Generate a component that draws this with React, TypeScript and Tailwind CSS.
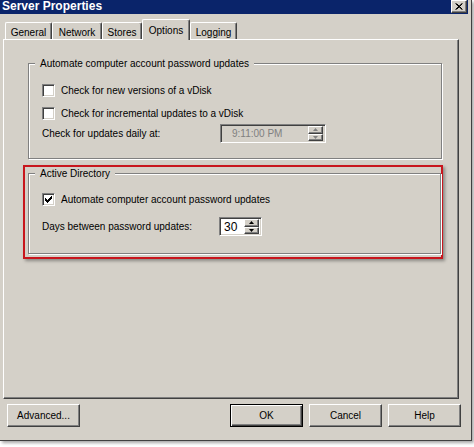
import React from 'react';

const face = 'bg-[#d4d0c8]';

function Checkbox({ checked }: { checked?: boolean }) {
  return (
    <div className="w-[13px] h-[13px] bg-white border border-t-[#808080] border-l-[#808080] border-r-white border-b-white shadow-[inset_1px_1px_0_#404040,inset_-1px_-1px_0_#d4d0c8] flex items-center justify-center shrink-0">
      {checked && (
        <svg width="9" height="9" viewBox="0 0 9 9">
          <path d="M1.5 3.5 L3.5 5.5 L7.5 1.5 M1.5 4.5 L3.5 6.5 L7.5 2.5 M1.5 5.5 L3.5 7.5 L7.5 3.5" stroke="#000" strokeWidth="1" fill="none" shapeRendering="crispEdges" />
        </svg>
      )}
    </div>
  );
}

function SpinButton({ up, disabled }: { up?: boolean; disabled?: boolean }) {
  const color = disabled ? '#808080' : '#000';
  return (
    <div className="h-[8px] w-[15px] bg-[#d4d0c8] border border-t-white border-l-white border-r-[#404040] border-b-[#404040] shadow-[inset_-1px_-1px_0_#808080] flex items-center justify-center">
      <svg width="5" height="3" viewBox="0 0 5 3">
        {up ? <path d="M2.5 0 L5 3 L0 3 Z" fill={color} /> : <path d="M0 0 L5 0 L2.5 3 Z" fill={color} />}
      </svg>
    </div>
  );
}

function SpinInput({ value, width, disabled }: { value: string; width: string; disabled?: boolean }) {
  return (
    <div
      className={`${width} h-[19px] flex items-stretch border border-t-[#808080] border-l-[#808080] border-r-white border-b-white shadow-[inset_1px_1px_0_#404040,inset_-1px_-1px_0_#d4d0c8] ${disabled ? 'bg-[#d4d0c8] text-[#808080]' : 'bg-white text-black'}`}
    >
      <div className={`flex-1 flex items-center ${disabled ? 'pl-[11px]' : 'pl-[4px] text-[12px]'}`}>{value}</div>
      <div className="flex flex-col justify-center gap-0 pr-[2px] py-[1px]">
        <SpinButton up disabled={disabled} />
        <SpinButton disabled={disabled} />
      </div>
    </div>
  );
}

function GroupBox({ title, className, children }: { title: string; className: string; children: React.ReactNode }) {
  return (
    <fieldset className={`border border-[#808080] shadow-[1px_1px_0_#fff,inset_1px_1px_0_#fff] p-0 m-0 ${className}`}>
      <legend className="ml-[6px] px-[5px] leading-[13px] bg-[#d4d0c8]">{title}</legend>
      {children}
    </fieldset>
  );
}

function Button({ label, isDefault, className = '' }: { label: string; isDefault?: boolean; className?: string }) {
  return (
    <button
      className={`w-[73px] h-[23px] ${face} text-[10px] text-black border ${
        isDefault
          ? 'border-black shadow-[inset_1px_1px_0_#fff,inset_-1px_-1px_0_#404040,inset_-2px_-2px_0_#808080]'
          : 'border-t-white border-l-white border-r-[#404040] border-b-[#404040] shadow-[inset_-1px_-1px_0_#808080]'
      } ${className}`}
    >
      {label}
    </button>
  );
}

const tabs = [
  { name: 'General', w: 'w-[47px]' },
  { name: 'Network', w: 'w-[50px]' },
  { name: 'Stores', w: 'w-[40px]' },
  { name: 'Options', w: 'w-[48px]', active: true },
  { name: 'Logging', w: 'w-[47px]' },
];

export default function App() {
  return (
    <div className="w-[474px] h-[447px] bg-white font-['Liberation_Sans',Arial,sans-serif] text-[10px] text-black">
      <div className="w-[472px] h-[441px] bg-[#d4d0c8] border-r border-b border-[#404040] shadow-[2px_2px_3px_rgba(0,0,0,0.35)] flex flex-col">
        {/* title bar */}
        <div className="h-[14px] mr-[3px] bg-[#0a246a] flex items-start justify-between">
          <span className="pl-[2px] text-[12px] leading-[13px] font-bold text-white">Server Properties</span>
          <div className="w-[16px] h-[13px] mr-[1px] bg-[#d4d0c8] border border-t-white border-l-white border-r-[#404040] border-b-[#404040] shadow-[inset_-1px_-1px_0_#808080] flex items-center justify-center">
            <svg width="8" height="7" viewBox="0 0 8 7">
              <path d="M0.5 0.5 L7 6.5 M1.5 0.5 L7.5 6.5 M7 0.5 L0.5 6.5 M7.5 0.5 L1.5 6.5" stroke="#000" strokeWidth="1" />
            </svg>
          </div>
        </div>

        {/* tabs */}
        <div className="flex items-end pl-[5px] mt-[5px] h-[20px] relative z-10">
          {tabs.map((t) =>
            t.active ? (
              <div
                key={t.name}
                className={`${t.w} h-[21px] -mb-[1px] ${face} border-t border-l border-t-white border-l-white border-r border-r-[#404040] rounded-t-[2px] shadow-[inset_-1px_0_0_#808080] flex justify-center pt-[3px]`}
              >
                {t.name}
              </div>
            ) : (
              <div
                key={t.name}
                className={`${t.w} h-[17px] ${face} border-t border-l border-t-white border-l-white border-r border-r-[#404040] rounded-t-[2px] shadow-[inset_-1px_0_0_#808080] flex justify-center pt-[2px]`}
              >
                {t.name}
              </div>
            )
          )}
        </div>

        {/* tab panel */}
        <div className="ml-[3px] w-[456px] h-[360px] border border-t-white border-l-white border-r-[#404040] border-b-[#404040] shadow-[inset_-1px_-1px_0_#808080] pt-[17px]">
          <GroupBox title="Automate computer account password updates" className="ml-[24px] w-[414px] h-[102px]">
            <div className="pl-[13px] pt-[14px] flex flex-col">
              <div className="flex items-center gap-[6px] h-[13px]">
                <Checkbox />
                <span>Check for new versions of a vDisk</span>
              </div>
              <div className="flex items-center gap-[6px] h-[13px] mt-[10px]">
                <Checkbox />
                <span>Check for incremental updates to a vDisk</span>
              </div>
              <div className="flex items-center mt-[4px]">
                <span className="w-[178px]">Check for updates daily at:</span>
                <SpinInput value="9:11:00 PM" width="w-[106px]" disabled />
              </div>
            </div>
          </GroupBox>

          <div className="ml-[19px] mt-[6px] w-[420px] h-[94px] border-2 border-[#c8161d] shadow-[2px_2px_3px_rgba(0,0,0,0.35)] pl-[3px]">
            <GroupBox title="Active Directory" className="w-[413px] h-[87px]">
              <div className="pl-[13px] pt-[13px] flex flex-col">
                <div className="flex items-center gap-[6px] h-[13px]">
                  <Checkbox checked />
                  <span>Automate computer account password updates</span>
                </div>
                <div className="flex items-center mt-[11px]">
                  <span className="w-[177px]">Days between password updates:</span>
                  <SpinInput value="30" width="w-[43px]" />
                </div>
              </div>
            </GroupBox>
          </div>
        </div>

        {/* buttons */}
        <div className="flex items-center mt-[5px] pl-[7px] pr-[10px]">
          <Button label="Advanced..." className="w-[72px]" />
          <div className="flex-1" />
          <div className="flex gap-[6px]">
            <Button label="OK" isDefault />
            <Button label="Cancel" />
            <Button label="Help" />
          </div>
        </div>
      </div>
    </div>
  );
}
